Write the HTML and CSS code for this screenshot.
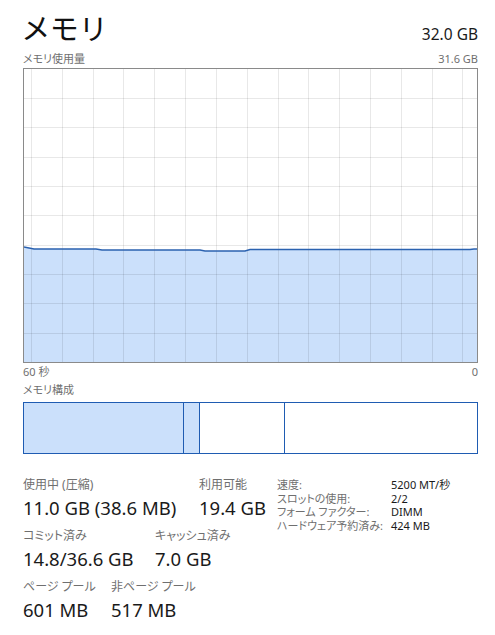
FILE: index.html
```html
<!DOCTYPE html>
<html lang="ja">
<head>
<meta charset="utf-8">
<title>メモリ</title>
<link rel="stylesheet" href="styles.css">
</head>
<body>
<div class="page">
  <header class="head">
    <h1 class="title">メモリ</h1>
    <span class="total">32.0 GB</span>
  </header>
  <div class="caption-row top-caption">
    <span>メモリ使用量</span>
    <span>31.6 GB</span>
  </div>
  <div class="graph">
    <svg width="453" height="293" viewBox="0 0 453 293">
      <polygon class="area" points="0,178 10,180 72,180 78,181 176,181 181,182 221,182 226,180.5 446,180.5 450,180 453,180 453,293 0,293"/>
      <g class="grid">
        <line x1="7.5" y1="0" x2="7.5" y2="293"/>
        <line x1="38.5" y1="0" x2="38.5" y2="293"/>
        <line x1="69.5" y1="0" x2="69.5" y2="293"/>
        <line x1="99.5" y1="0" x2="99.5" y2="293"/>
        <line x1="130.5" y1="0" x2="130.5" y2="293"/>
        <line x1="161.5" y1="0" x2="161.5" y2="293"/>
        <line x1="192.5" y1="0" x2="192.5" y2="293"/>
        <line x1="223.5" y1="0" x2="223.5" y2="293"/>
        <line x1="254.5" y1="0" x2="254.5" y2="293"/>
        <line x1="284.5" y1="0" x2="284.5" y2="293"/>
        <line x1="315.5" y1="0" x2="315.5" y2="293"/>
        <line x1="346.5" y1="0" x2="346.5" y2="293"/>
        <line x1="377.5" y1="0" x2="377.5" y2="293"/>
        <line x1="408.5" y1="0" x2="408.5" y2="293"/>
        <line x1="438.5" y1="0" x2="438.5" y2="293"/>
        <line x1="0" y1="29.5" x2="453" y2="29.5"/>
        <line x1="0" y1="58.5" x2="453" y2="58.5"/>
        <line x1="0" y1="88.5" x2="453" y2="88.5"/>
        <line x1="0" y1="117.5" x2="453" y2="117.5"/>
        <line x1="0" y1="146.5" x2="453" y2="146.5"/>
        <line x1="0" y1="176.5" x2="453" y2="176.5"/>
        <line x1="0" y1="205.5" x2="453" y2="205.5"/>
        <line x1="0" y1="234.5" x2="453" y2="234.5"/>
        <line x1="0" y1="264.5" x2="453" y2="264.5"/>
      </g>
      <polyline class="trace" points="0,178 10,180 72,180 78,181 176,181 181,182 221,182 226,180.5 446,180.5 450,180 453,180"/>
    </svg>
  </div>
  <div class="caption-row axis">
    <span>60 秒</span>
    <span>0</span>
  </div>
  <div class="caption comp-caption">メモリ構成</div>
  <div class="composition">
    <div class="seg used" style="width:159px"></div>
    <div class="seg used divided" style="width:16px"></div>
    <div class="seg divided" style="width:85px"></div>
    <div class="seg divided" style="flex:1"></div>
  </div>
  <section class="stats">
    <div class="stats-left">
      <div class="stat-row">
        <div class="stat col-in-use"><div class="label">使用中 (圧縮)</div><div class="value">11.0 GB (38.6 MB)</div></div>
        <div class="stat"><div class="label">利用可能</div><div class="value">19.4 GB</div></div>
      </div>
      <div class="stat-row">
        <div class="stat col-commit"><div class="label">コミット済み</div><div class="value">14.8/36.6 GB</div></div>
        <div class="stat"><div class="label">キャッシュ済み</div><div class="value">7.0 GB</div></div>
      </div>
      <div class="stat-row">
        <div class="stat col-paged"><div class="label">ページ プール</div><div class="value">601 MB</div></div>
        <div class="stat"><div class="label">非ページ プール</div><div class="value">517 MB</div></div>
      </div>
    </div>
    <dl class="specs">
      <dt>速度:</dt><dd>5200 MT/秒</dd>
      <dt>スロットの使用:</dt><dd>2/2</dd>
      <dt>フォーム ファクター:</dt><dd>DIMM</dd>
      <dt>ハードウェア予約済み:</dt><dd>424 MB</dd>
    </dl>
  </section>
</div>
</body>
</html>
```

FILE: styles.css
```css
* { box-sizing: border-box; }

html, body {
  margin: 0;
  padding: 0;
  background: #ffffff;
}

body {
  font-family: "Noto Sans", "Noto Sans CJK JP", sans-serif;
  color: #1a1a1a;
  font-feature-settings: "palt";
}

.page {
  width: 495px;
  padding: 11px 17px 0 23px;
}

.head {
  display: flex;
  justify-content: space-between;
  align-items: baseline;
  height: 36px;
}

.title {
  margin: 0;
  font-size: 29px;
  font-weight: 400;
  line-height: 36px;
  letter-spacing: 2.5px;
  color: #111;
}

.total {
  font-size: 15.5px;
  line-height: 20px;
  color: #1a1a1a;
}

.caption-row {
  display: flex;
  justify-content: space-between;
  font-size: 11px;
  line-height: 14px;
  color: #6f6f6f;
}

.top-caption {
  margin-top: 5px;
}

.graph {
  margin-top: 2px;
  width: 455px;
  height: 295px;
  border: 1px solid #8a8a8a;
}

.graph svg {
  display: block;
}

.area {
  fill: #cbe0fb;
}

.grid line {
  stroke: rgba(0, 0, 0, 0.09);
  stroke-width: 1;
}

.trace {
  fill: none;
  stroke: #2b62b0;
  stroke-width: 1.5;
}

.axis {
  margin-top: 2px;
}

.caption {
  font-size: 11px;
  line-height: 14px;
  color: #6f6f6f;
}

.comp-caption {
  margin-top: 4px;
}

.composition {
  margin-top: 5px;
  width: 455px;
  height: 52px;
  border: 1px solid #1f5cb2;
  display: flex;
}

.seg {
  height: 100%;
  background: #ffffff;
}

.seg.used {
  background: #cbe0fb;
}

.seg.divided {
  border-left: 1px solid #1f5cb2;
}

.stats {
  margin-top: 23px;
  display: flex;
}

.stats-left {
  width: 254px;
  display: flex;
  flex-direction: column;
  gap: 8px;
}

.stat-row {
  display: flex;
}

.col-in-use { width: 176px; }
.col-commit { width: 132px; }
.col-paged { width: 88px; }

.label {
  font-size: 12px;
  line-height: 16px;
  color: #6f6f6f;
  white-space: nowrap;
}

.value {
  margin-top: 3px;
  font-size: 18.5px;
  line-height: 24px;
  color: #1a1a1a;
  white-space: nowrap;
}

.specs {
  margin: 1px 0 0 0;
  display: grid;
  grid-template-columns: 114px auto;
  font-size: 11px;
  line-height: 13.7px;
  align-content: start;
}

.specs dt {
  color: #6f6f6f;
  white-space: nowrap;
}

.specs dd {
  margin: 0;
  color: #1a1a1a;
  white-space: nowrap;
}
```
